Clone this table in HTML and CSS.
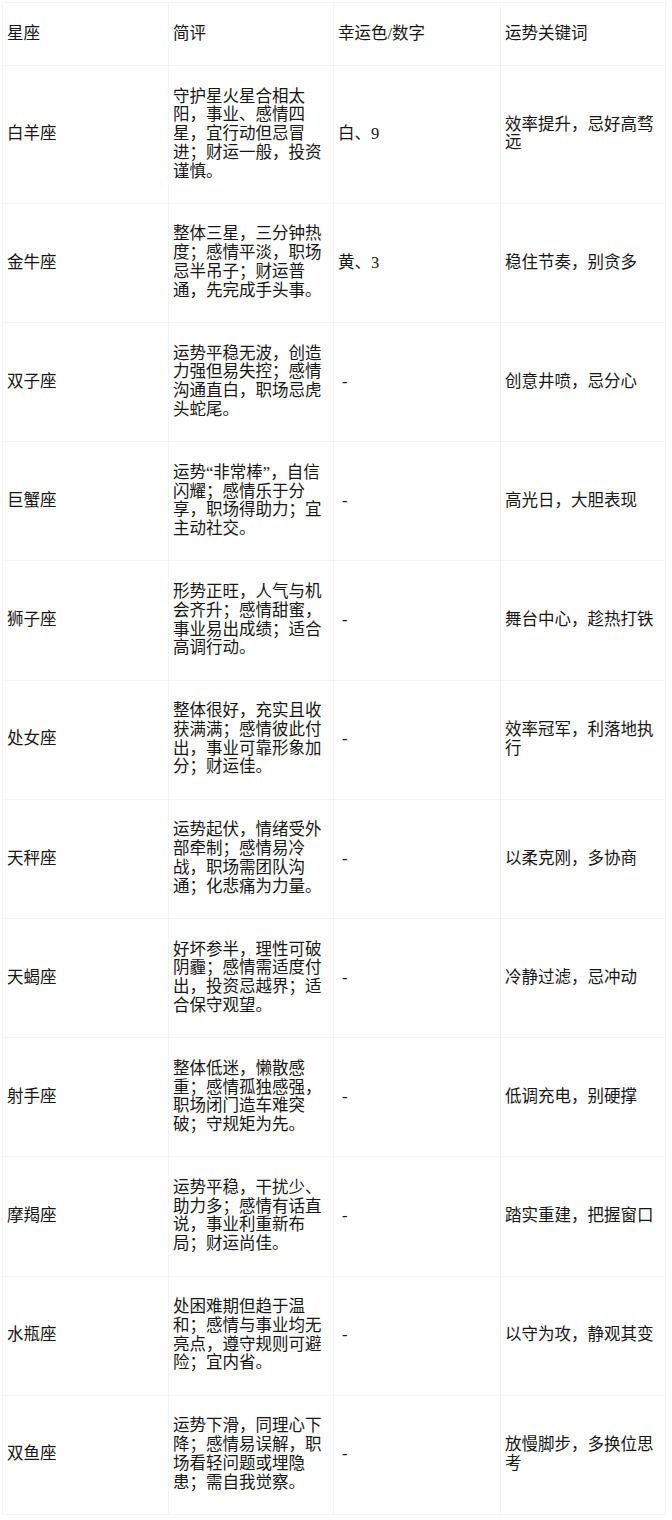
FILE: index.html
```html
<!DOCTYPE html>
<html lang="zh-CN">
<head>
<meta charset="utf-8">
<title>星座运势</title>
<link rel="stylesheet" href="styles.css">
</head>
<body>
<table class="fortune">
  <colgroup>
    <col class="c1"><col class="c2"><col class="c3"><col class="c4">
  </colgroup>
  <thead>
    <tr><th>星座</th><th>简评</th><th>幸运色/数字</th><th>运势关键词</th></tr>
  </thead>
  <tbody>
    <tr><td>白羊座</td><td>守护星火星合相太阳，事业、感情四星，宜行动但忌冒进；财运一般，投资谨慎。</td><td>白、9</td><td>效率提升，忌好高骛远</td></tr>
    <tr><td>金牛座</td><td>整体三星，三分钟热度；感情平淡，职场忌半吊子；财运普通，先完成手头事。</td><td>黄、3</td><td>稳住节奏，别贪多</td></tr>
    <tr><td>双子座</td><td>运势平稳无波，创造力强但易失控；感情沟通直白，职场忌虎头蛇尾。</td><td class="dash">-</td><td>创意井喷，忌分心</td></tr>
    <tr><td>巨蟹座</td><td>运势“非常棒”，自信闪耀；感情乐于分享，职场得助力；宜主动社交。</td><td class="dash">-</td><td>高光日，大胆表现</td></tr>
    <tr><td>狮子座</td><td>形势正旺，人气与机会齐升；感情甜蜜，事业易出成绩；适合高调行动。</td><td class="dash">-</td><td>舞台中心，趁热打铁</td></tr>
    <tr><td>处女座</td><td>整体很好，充实且收获满满；感情彼此付出，事业可靠形象加分；财运佳。</td><td class="dash">-</td><td>效率冠军，利落地执行</td></tr>
    <tr><td>天秤座</td><td>运势起伏，情绪受外部牵制；感情易冷战，职场需团队沟通；化悲痛为力量。</td><td class="dash">-</td><td>以柔克刚，多协商</td></tr>
    <tr><td>天蝎座</td><td>好坏参半，理性可破阴霾；感情需适度付出，投资忌越界；适合保守观望。</td><td class="dash">-</td><td>冷静过滤，忌冲动</td></tr>
    <tr><td>射手座</td><td>整体低迷，懒散感重；感情孤独感强，职场闭门造车难突破；守规矩为先。</td><td class="dash">-</td><td>低调充电，别硬撑</td></tr>
    <tr><td>摩羯座</td><td>运势平稳，干扰少、助力多；感情有话直说，事业利重新布局；财运尚佳。</td><td class="dash">-</td><td>踏实重建，把握窗口</td></tr>
    <tr><td>水瓶座</td><td>处困难期但趋于温和；感情与事业均无亮点，遵守规则可避险；宜内省。</td><td class="dash">-</td><td>以守为攻，静观其变</td></tr>
    <tr><td>双鱼座</td><td>运势下滑，同理心下降；感情易误解，职场看轻问题或埋隐患；需自我觉察。</td><td class="dash">-</td><td>放慢脚步，多换位思考</td></tr>
  </tbody>
</table>
</body>
</html>
```
FILE: styles.css
```css
html, body {
  margin: 0;
  padding: 0;
  background: #ffffff;
}

body {
  padding: 2px;
  font-family: "Liberation Serif", "Noto Sans CJK SC", sans-serif;
  font-size: 16.5px;
  color: #161616;
}

.fortune {
  border-collapse: collapse;
  table-layout: fixed;
  width: 663px;
}

.fortune .c1 { width: 166px; }
.fortune .c2 { width: 165px; }
.fortune .c3 { width: 167px; }
.fortune .c4 { width: 165px; }

.fortune th,
.fortune td {
  border: 1px solid #f3f3f3;
  padding: 21.6px 4px 21.6px 4px;
  line-height: 18.75px;
  text-align: left;
  vertical-align: middle;
  font-weight: normal;
}

.fortune td.dash {
  padding-left: 8px;
}
```
